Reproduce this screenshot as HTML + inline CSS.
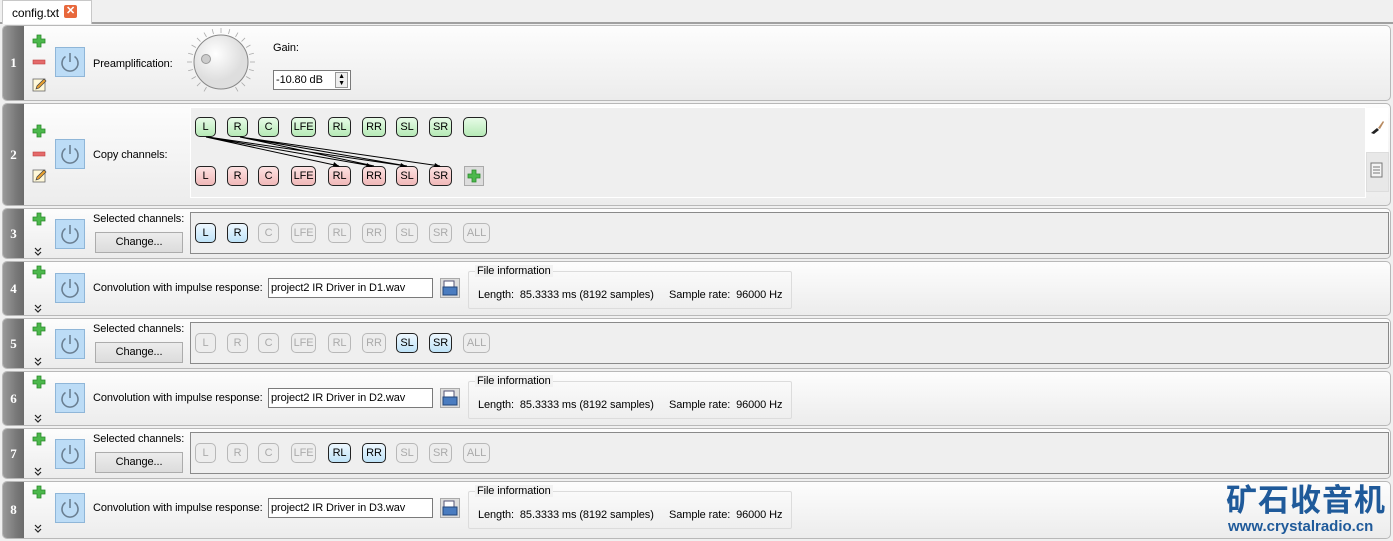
<!DOCTYPE html>
<html><head><meta charset="utf-8"><style>
body{margin:0;width:1393px;height:541px;background:#f0f0f0;font-family:"Liberation Sans",sans-serif;font-size:11px;letter-spacing:-0.1px;color:#000;position:relative;overflow:hidden}
.a{position:absolute}
.tabbar{left:0;top:0;width:1393px;height:22px;background:#f0f0f0;border-bottom:2px solid #a0a0a0}
.tab{left:2px;top:0;width:88px;height:23px;background:#fff;border:1px solid #c8c8c8;border-bottom:none}
.row{left:2px;width:1389px;border:1px solid #b8b8b8;border-radius:5px;background:linear-gradient(#fdfdfd,#ececec);box-sizing:border-box}
.num{left:3px;width:21px;border-radius:4px 0 0 4px;background:linear-gradient(90deg,#9a9a9a,#7a7a7a 60%,#6a6a6a);color:#fff;font:bold 13px "Liberation Serif",serif;text-align:center}
.pw{width:30px;height:30px;background:#bcdcf6;border:1px solid #8fb6d8;box-sizing:border-box}
.ch{position:absolute;height:20px;border:1px solid #222;border-radius:5px;box-sizing:border-box;text-align:center;line-height:18px;font-size:11px}
.g{background:linear-gradient(#e6fbe6,#b6eab6)}
.r{background:linear-gradient(#fde2e2,#f0b8b8)}
.b{background:linear-gradient(#eef8ff,#bfe3f8)}
.d{border-color:#b8b8b8;color:#aaa;background:#ededed}
.box{border:1px solid #8a8a8a;background:#efefef;box-sizing:border-box}
.btn{width:88px;height:21px;border:1px solid #acacac;background:linear-gradient(#ececec,#dcdcdc);box-sizing:border-box;text-align:center;line-height:19px}
.inp{width:165px;height:20px;border:1px solid #7a7a7a;background:#fff;box-sizing:border-box;padding-left:2px;line-height:18px;font-size:11px}
.fi{width:324px;height:38px;border:1px solid #dcdcdc;border-radius:2px;box-sizing:border-box}
</style></head><body>
<div class="a tabbar"></div>
<div class="a tab"><span class="a" style="left:9px;top:5px;font-size:12px">config.txt</span>
<div class="a" style="left:61px;top:4px;width:13px;height:13px;background:#e8683c;border-radius:2px;color:#fff;font:bold 11px/13px sans-serif;text-align:center">✕</div></div>

<div class="a row" style="top:25px;height:76px"></div><div class="a num" style="top:26px;height:74px;line-height:74px">1</div>
<div class="a row" style="top:103px;height:103px"></div><div class="a num" style="top:104px;height:101px;line-height:101px">2</div>
<div class="a row" style="top:208px;height:51px"></div><div class="a num" style="top:209px;height:49px;line-height:49px">3</div>
<div class="a row" style="top:261px;height:55px"></div><div class="a num" style="top:262px;height:53px;line-height:53px">4</div>
<div class="a row" style="top:318px;height:51px"></div><div class="a num" style="top:319px;height:49px;line-height:49px">5</div>
<div class="a row" style="top:371px;height:55px"></div><div class="a num" style="top:372px;height:53px;line-height:53px">6</div>
<div class="a row" style="top:428px;height:51px"></div><div class="a num" style="top:429px;height:49px;line-height:49px">7</div>
<div class="a row" style="top:481px;height:58px"></div><div class="a num" style="top:482px;height:56px;line-height:56px">8</div>

<svg class="a" style="left:0;top:0" width="60" height="541">
<defs><g id="p"><path d="M4 0h4v4h4v4h-4v4h-4v-4h-4v-4h4z" fill="#4cb84c" stroke="#2a8a2a" stroke-width="0.8"/></g>
<g id="m"><rect x="0" y="4" width="12" height="4" fill="#e46a6a" stroke="#c04040" stroke-width="0.6"/></g>
<g id="e"><rect x="0" y="1" width="12" height="12" fill="#fff8d8" stroke="#666" stroke-width="0.8"/><path d="M3 11l1-3 7-7 2 2-7 7z" fill="#e8a030" stroke="#444" stroke-width="0.7"/></g>
<g id="c"><path d="M0 0l3 3l3-3M0 4l3 3l3-3" fill="none" stroke="#222" stroke-width="1.2"/></g></defs>
<use href="#p" x="33" y="35"/><use href="#m" x="33" y="56"/><use href="#e" x="33" y="78"/>
<use href="#p" x="33" y="125"/><use href="#m" x="33" y="148"/><use href="#e" x="33" y="169"/>
<use href="#p" x="33" y="213"/><use href="#c" x="35" y="248"/>
<use href="#p" x="33" y="266"/><use href="#c" x="35" y="305"/>
<use href="#p" x="33" y="323"/><use href="#c" x="35" y="358"/>
<use href="#p" x="33" y="376"/><use href="#c" x="35" y="415"/>
<use href="#p" x="33" y="433"/><use href="#c" x="35" y="468"/>
<use href="#p" x="33" y="486"/><use href="#c" x="35" y="525"/>
</svg>

<svg width="0" height="0" style="position:absolute"><defs><g id="pwr"><path d="M10.5 9.5a8 8 0 1 0 9 0" fill="none" stroke="#6a7f92" stroke-width="1.6"/><path d="M15 6v9" stroke="#6a7f92" stroke-width="1.6"/></g></defs></svg>
<div class="a pw" style="left:55px;top:47px"><svg width="30" height="30"><use href="#pwr" x="-1" y="-1"/></svg></div>
<div class="a pw" style="left:55px;top:139px"><svg width="30" height="30"><use href="#pwr" x="-1" y="-1"/></svg></div>
<div class="a pw" style="left:55px;top:219px"><svg width="30" height="30"><use href="#pwr" x="-1" y="-1"/></svg></div>
<div class="a pw" style="left:55px;top:273px"><svg width="30" height="30"><use href="#pwr" x="-1" y="-1"/></svg></div>
<div class="a pw" style="left:55px;top:329px"><svg width="30" height="30"><use href="#pwr" x="-1" y="-1"/></svg></div>
<div class="a pw" style="left:55px;top:383px"><svg width="30" height="30"><use href="#pwr" x="-1" y="-1"/></svg></div>
<div class="a pw" style="left:55px;top:439px"><svg width="30" height="30"><use href="#pwr" x="-1" y="-1"/></svg></div>
<div class="a pw" style="left:55px;top:493px"><svg width="30" height="30"><use href="#pwr" x="-1" y="-1"/></svg></div>

<span class="a" style="left:93px;top:58px">Preamplification:</span>
<svg class="a" style="left:186px;top:27px" width="70" height="70">
<defs><radialGradient id="kg" cx="40%" cy="35%"><stop offset="0" stop-color="#fff"/><stop offset="1" stop-color="#dedede"/></radialGradient></defs>
<g stroke="#aaa" stroke-width="0.8" transform="translate(35 35)">
<path d="M0 -34v5" transform="rotate(0)"/><path d="M0 -34v5" transform="rotate(15)"/><path d="M0 -34v5" transform="rotate(30)"/><path d="M0 -34v5" transform="rotate(45)"/><path d="M0 -34v5" transform="rotate(60)"/><path d="M0 -34v5" transform="rotate(75)"/><path d="M0 -34v5" transform="rotate(90)"/><path d="M0 -34v5" transform="rotate(105)"/><path d="M0 -34v5" transform="rotate(120)"/><path d="M0 -34v5" transform="rotate(135)"/><path d="M0 -34v5" transform="rotate(150)"/><path d="M0 -34v5" transform="rotate(-15)"/><path d="M0 -34v5" transform="rotate(-30)"/><path d="M0 -34v5" transform="rotate(-45)"/><path d="M0 -34v5" transform="rotate(-60)"/><path d="M0 -34v5" transform="rotate(-75)"/><path d="M0 -34v5" transform="rotate(-90)"/><path d="M0 -34v5" transform="rotate(-105)"/><path d="M0 -34v5" transform="rotate(-120)"/><path d="M0 -34v5" transform="rotate(-135)"/><path d="M0 -34v5" transform="rotate(-150)"/>
</g>
<circle cx="35" cy="35" r="27" fill="url(#kg)" stroke="#888"/>
<circle cx="20" cy="32" r="4.5" fill="#ccc" stroke="#999"/></svg>
<span class="a" style="left:273px;top:42px">Gain:</span>
<div class="a inp" style="left:273px;top:70px;width:78px;height:20px">-10.80 dB</div>
<div class="a" style="left:335px;top:72px;width:13px;height:16px;border:1px solid #999;background:#eee;font-size:7px;line-height:7px;text-align:center;box-sizing:border-box">▲<br>▼</div>

<span class="a" style="left:93px;top:149px">Copy channels:</span>
<div class="a" style="left:190px;top:107px;width:1176px;height:91px;background:#efefef;border:1px solid #fff;box-sizing:border-box"></div>
<div class="a" style="left:1365px;top:108px;width:23px;height:44px;background:#fff"></div>
<div class="a" style="left:1366px;top:152px;width:21px;height:38px;background:#e8e8e8;border:1px solid #ddd"></div>
<svg class="a" style="left:1368px;top:118px" width="18" height="18"><path d="M3 15l6-5 2 2-5 4z" fill="#222"/><path d="M10 10l5-7 1 1-4 7z" fill="#b88a60"/></svg>
<svg class="a" style="left:1370px;top:162px" width="14" height="16"><rect x="1" y="1" width="11" height="14" fill="#f4f4f4" stroke="#777"/><path d="M3 5h7M3 8h7M3 11h7" stroke="#777"/></svg>
<div class="ch g" style="left:195px;top:117px;width:21px">L</div>
<div class="ch g" style="left:227px;top:117px;width:21px">R</div>
<div class="ch g" style="left:258px;top:117px;width:21px">C</div>
<div class="ch g" style="left:291px;top:117px;width:25px">LFE</div>
<div class="ch g" style="left:328px;top:117px;width:23px">RL</div>
<div class="ch g" style="left:362px;top:117px;width:24px">RR</div>
<div class="ch g" style="left:396px;top:117px;width:22px">SL</div>
<div class="ch g" style="left:429px;top:117px;width:23px">SR</div>
<div class="ch g" style="left:463px;top:117px;width:24px"></div>
<div class="ch r" style="left:195px;top:166px;width:21px">L</div>
<div class="ch r" style="left:227px;top:166px;width:21px">R</div>
<div class="ch r" style="left:258px;top:166px;width:21px">C</div>
<div class="ch r" style="left:291px;top:166px;width:25px">LFE</div>
<div class="ch r" style="left:328px;top:166px;width:23px">RL</div>
<div class="ch r" style="left:362px;top:166px;width:24px">RR</div>
<div class="ch r" style="left:396px;top:166px;width:22px">SL</div>
<div class="ch r" style="left:429px;top:166px;width:23px">SR</div>
<div class="a" style="left:464px;top:166px;width:20px;height:20px;border:1px solid #aaa;background:#ddd;box-sizing:border-box"><svg width="18" height="18"><use href="#p" x="3" y="3"/></svg></div>
<svg class="a" style="left:0;top:0" width="500" height="200">
<g stroke="#000" stroke-width="1" fill="none"><path d="M206 137L339 166M206 137L372 166M208 137L406 166M240 137L374 166M240 137L407 166M240 137L440 166"/></g>
<g fill="#000"><path d="M340 167l-6-5 -1 4z"/><path d="M373 167l-6-4-1 4z"/><path d="M407 167l-6-4-1 4z"/><path d="M441 167l-6-4-1 4z"/></g></svg>

<span class="a" style="left:93px;top:213px">Selected channels:</span>
<div class="a btn" style="left:95px;top:232px">Change...</div>
<div class="a box" style="left:190px;top:212px;width:1199px;height:42px"></div>
<div class="ch b" style="left:195px;top:223px;width:21px">L</div>
<div class="ch b" style="left:227px;top:223px;width:21px">R</div>
<div class="ch d" style="left:258px;top:223px;width:21px">C</div>
<div class="ch d" style="left:291px;top:223px;width:25px">LFE</div>
<div class="ch d" style="left:328px;top:223px;width:23px">RL</div>
<div class="ch d" style="left:362px;top:223px;width:24px">RR</div>
<div class="ch d" style="left:396px;top:223px;width:22px">SL</div>
<div class="ch d" style="left:429px;top:223px;width:23px">SR</div>
<div class="ch d" style="left:463px;top:223px;width:27px">ALL</div>

<span class="a" style="left:93px;top:323px">Selected channels:</span>
<div class="a btn" style="left:95px;top:342px">Change...</div>
<div class="a box" style="left:190px;top:322px;width:1199px;height:42px"></div>
<div class="ch d" style="left:195px;top:333px;width:21px">L</div>
<div class="ch d" style="left:227px;top:333px;width:21px">R</div>
<div class="ch d" style="left:258px;top:333px;width:21px">C</div>
<div class="ch d" style="left:291px;top:333px;width:25px">LFE</div>
<div class="ch d" style="left:328px;top:333px;width:23px">RL</div>
<div class="ch d" style="left:362px;top:333px;width:24px">RR</div>
<div class="ch b" style="left:396px;top:333px;width:22px">SL</div>
<div class="ch b" style="left:429px;top:333px;width:23px">SR</div>
<div class="ch d" style="left:463px;top:333px;width:27px">ALL</div>

<span class="a" style="left:93px;top:433px">Selected channels:</span>
<div class="a btn" style="left:95px;top:452px">Change...</div>
<div class="a box" style="left:190px;top:432px;width:1199px;height:42px"></div>
<div class="ch d" style="left:195px;top:443px;width:21px">L</div>
<div class="ch d" style="left:227px;top:443px;width:21px">R</div>
<div class="ch d" style="left:258px;top:443px;width:21px">C</div>
<div class="ch d" style="left:291px;top:443px;width:25px">LFE</div>
<div class="ch b" style="left:328px;top:443px;width:23px">RL</div>
<div class="ch b" style="left:362px;top:443px;width:24px">RR</div>
<div class="ch d" style="left:396px;top:443px;width:22px">SL</div>
<div class="ch d" style="left:429px;top:443px;width:23px">SR</div>
<div class="ch d" style="left:463px;top:443px;width:27px">ALL</div>

<svg width="0" height="0" style="position:absolute"><defs><g id="fl"><rect x="0.5" y="0.5" width="19" height="19" fill="#ddd" stroke="#aaa"/><rect x="4" y="3" width="10" height="8" fill="#fff" stroke="#557"/><path d="M3 9h14v8H3z" fill="#4a7cc0" stroke="#24467a"/></g></defs></svg>

<span class="a" style="left:93px;top:282px">Convolution with impulse response:</span>
<div class="a inp" style="left:268px;top:278px">project2 IR Driver in D1.wav</div>
<svg class="a" style="left:440px;top:278px" width="20" height="20"><use href="#fl"/></svg>
<div class="a fi" style="left:468px;top:271px"></div>
<span class="a" style="left:475px;top:265px;background:#f2f2f2;padding:0 2px">File information</span>
<span class="a" style="left:478px;top:289px">Length:&nbsp; 85.3333 ms (8192 samples)</span>
<span class="a" style="left:669px;top:289px">Sample rate:&nbsp; 96000 Hz</span>

<span class="a" style="left:93px;top:392px">Convolution with impulse response:</span>
<div class="a inp" style="left:268px;top:388px">project2 IR Driver in D2.wav</div>
<svg class="a" style="left:440px;top:388px" width="20" height="20"><use href="#fl"/></svg>
<div class="a fi" style="left:468px;top:381px"></div>
<span class="a" style="left:475px;top:375px;background:#f2f2f2;padding:0 2px">File information</span>
<span class="a" style="left:478px;top:399px">Length:&nbsp; 85.3333 ms (8192 samples)</span>
<span class="a" style="left:669px;top:399px">Sample rate:&nbsp; 96000 Hz</span>

<span class="a" style="left:93px;top:502px">Convolution with impulse response:</span>
<div class="a inp" style="left:268px;top:498px">project2 IR Driver in D3.wav</div>
<svg class="a" style="left:440px;top:498px" width="20" height="20"><use href="#fl"/></svg>
<div class="a fi" style="left:468px;top:491px"></div>
<span class="a" style="left:475px;top:485px;background:#f2f2f2;padding:0 2px">File information</span>
<span class="a" style="left:478px;top:509px">Length:&nbsp; 85.3333 ms (8192 samples)</span>
<span class="a" style="left:669px;top:509px">Sample rate:&nbsp; 96000 Hz</span>

<div class="a" style="left:1226px;top:481px;font:bold 31px/34px 'WenQuanYi Zen Hei','Noto Sans CJK SC',sans-serif;color:#1f5a9a;letter-spacing:1px">矿石收音机</div>
<div class="a" style="left:1228px;top:518px;font:bold 15px/18px 'Liberation Sans',sans-serif;color:#1f5a9a;letter-spacing:0">www.crystalradio.cn</div>
</body></html>
